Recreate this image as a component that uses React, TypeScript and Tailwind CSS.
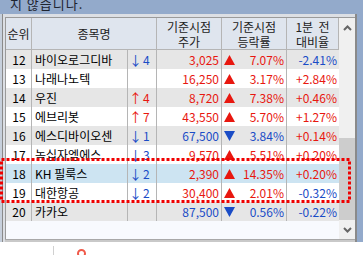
import React from 'react';

type Row = {
  rank: number;
  name: string;
  dir?: 'up' | 'down';
  step?: number;
  price: string;
  priceUp: boolean;
  rateUp: boolean;
  rate: string;
  min: string;
  bg: string;
};

const RED = 'text-[#e8170f]';
const BLUE = 'text-[#1a4cc6]';

// 순위 데이터 (12위 ~ 20위)
const rows: Row[] = [
  { rank: 12, name: '바이오로그디바', dir: 'down', step: 4, price: '3,025', priceUp: true, rateUp: true, rate: '7.07%', min: '-2.41%', bg: 'bg-[#e6e6e6]' },
  { rank: 13, name: '나래나노텍', price: '16,250', priceUp: true, rateUp: true, rate: '3.17%', min: '+2.84%', bg: 'bg-white' },
  { rank: 14, name: '우진', dir: 'up', step: 4, price: '8,720', priceUp: true, rateUp: true, rate: '7.38%', min: '+0.46%', bg: 'bg-[#e6e6e6]' },
  { rank: 15, name: '에브리봇', dir: 'up', step: 7, price: '43,550', priceUp: true, rateUp: true, rate: '5.70%', min: '+1.27%', bg: 'bg-white' },
  { rank: 16, name: '에스디바이오센', dir: 'down', step: 1, price: '67,500', priceUp: false, rateUp: false, rate: '3.84%', min: '+0.14%', bg: 'bg-[#e6e6e6]' },
  { rank: 17, name: '녹십자엠에스', dir: 'down', step: 3, price: '9,570', priceUp: true, rateUp: true, rate: '5.51%', min: '+0.20%', bg: 'bg-white' },
  { rank: 18, name: 'KH 필룩스', dir: 'down', step: 2, price: '2,390', priceUp: true, rateUp: true, rate: '14.35%', min: '+0.20%', bg: 'bg-[#cde4f2]' },
  { rank: 19, name: '대한항공', dir: 'down', step: 2, price: '30,400', priceUp: true, rateUp: true, rate: '2.01%', min: '-0.32%', bg: 'bg-white' },
  { rank: 20, name: '카카오', price: '87,500', priceUp: false, rateUp: false, rate: '0.56%', min: '-0.22%', bg: 'bg-[#e6e6e6]' },
];

function Tri({ up }: { up: boolean }) {
  return (
    <svg width="11" height="10" viewBox="0 0 11 10" className="shrink-0">
      {up ? (
        <polygon points="5.5,0 11,10 0,10" fill="#e8170f" />
      ) : (
        <polygon points="0,0 11,0 5.5,10" fill="#1a4cc6" />
      )}
    </svg>
  );
}

function Chevron({ up }: { up: boolean }) {
  return (
    <svg width="9" height="6" viewBox="0 0 9 6">
      <polyline
        points={up ? '1,5 4.5,1.5 8,5' : '1,1 4.5,4.5 8,1'}
        fill="none"
        stroke="#666"
        strokeWidth="2"
      />
    </svg>
  );
}

export default function App() {
  return (
    <div className="relative w-[363px] h-[255px] overflow-hidden bg-white font-['Noto_Sans_CJK_KR','Noto_Sans',sans-serif] text-[12px] text-black">
      {/* 상단 안내 문구 (잘린 상태) */}
      <div className="h-[14px] overflow-hidden bg-[#93aacb] pl-[10px]">
        <div className="-mt-[4px] text-[13px] leading-[16px] tracking-[1px] text-[#1e2430]">지 않습니다.</div>
      </div>

      {/* 창 프레임 */}
      <div className="flex h-[228px] bg-[#c7d0dc]">
        <div className="w-[2px]" />
        <div className="flex flex-1 flex-col border-l border-[#8a8a8a] bg-[#dcdfe4] pt-[3px] pl-[2px]">
          <div className="flex flex-1 border-t border-l border-[#9a9a9a] bg-[#f8fafe]">
            {/* 표 */}
            <div className="flex w-[333px] flex-col">
              {/* 헤더 */}
              <div className="grid h-[32px] grid-cols-[26px_125px_65px_65px_52px] border-b border-[#b5b5b5] bg-[#dfe5ee] leading-[15px] text-[#222]">
                <div className="flex items-center justify-center border-r border-[#b5b5b5]">순위</div>
                <div className="flex items-center justify-center border-r border-[#b5b5b5]">종목명</div>
                <div className="flex flex-col items-center justify-center border-r border-[#b5b5b5]">
                  <span>기준시점</span>
                  <span>주가</span>
                </div>
                <div className="flex flex-col items-center justify-center border-r border-[#b5b5b5]">
                  <span>기준시점</span>
                  <span>등락률</span>
                </div>
                <div className="flex flex-col items-center justify-center border-r border-[#b5b5b5]">
                  <span>1분&nbsp;&nbsp;전</span>
                  <span>대비율</span>
                </div>
              </div>

              {/* 데이터 행 */}
              {rows.map((r) => (
                <div
                  key={r.rank}
                  className={`grid h-[19px] grid-cols-[26px_96px_29px_65px_65px_52px] leading-[19px] ${r.bg}`}
                >
                  <div className="border-r border-[#b5b5b5] pl-[1px] text-center">{r.rank}</div>
                  <div className="overflow-hidden whitespace-nowrap border-r border-[#b5b5b5] pl-[3px]">{r.name}</div>
                  <div className={`flex items-center border-r border-[#b5b5b5] pl-[1px] ${r.dir === 'up' ? RED : BLUE}`}>
                    {r.dir && (
                      <>
                        <span className="w-[14px] text-[13px]">{r.dir === 'up' ? '↑' : '↓'}</span>
                        <span>{r.step}</span>
                      </>
                    )}
                  </div>
                  <div className={`border-r border-[#b5b5b5] pr-[2px] text-right ${r.priceUp ? RED : BLUE}`}>{r.price}</div>
                  <div className={`flex items-center justify-between border-r border-[#b5b5b5] pl-[2px] pr-[2px] ${r.rateUp ? RED : BLUE}`}>
                    <Tri up={r.rateUp} />
                    <span>{r.rate}</span>
                  </div>
                  <div className={`pr-[2px] text-right ${r.min.startsWith('+') ? RED : BLUE}`}>{r.min}</div>
                </div>
              ))}
            </div>

            {/* 스크롤바 */}
            <div className="flex w-[16px] flex-col bg-[#f0f0f0]">
              <div className="flex h-[20px] items-center justify-center">
                <Chevron up />
              </div>
              <div className="h-[100px]" />
              <div className="h-[82px] bg-[#cdcdcd]" />
              <div className="flex flex-1 items-center justify-center">
                <Chevron up={false} />
              </div>
            </div>
          </div>
          <div className="h-[3px] border-t border-[#a8a8a8] bg-[#c9c9c9]" />
        </div>
        <div className="w-[2px] bg-[#8a8a8a]" />
        <div className="w-[6px] bg-[#93aacb]" />
      </div>

      {/* 하단 여백 */}
      <div className="relative h-[13px] bg-white">
        <div className="absolute left-[53px] top-[4px] h-[10px] w-px bg-[#d0d0d0]" />
        <div className="absolute left-[77px] top-[7px] h-[9px] w-[9px] rounded-full border-[2px] border-[#f05a4a]" />
      </div>

      {/* 빨간 점선 강조 */}
      <svg className="pointer-events-none absolute left-0 top-[158px]" width="352" height="46">
        <rect x="1.5" y="1.5" width="348" height="42" fill="none" stroke="#f00000" strokeWidth="3" strokeDasharray="3 2" />
      </svg>
    </div>
  );
}
